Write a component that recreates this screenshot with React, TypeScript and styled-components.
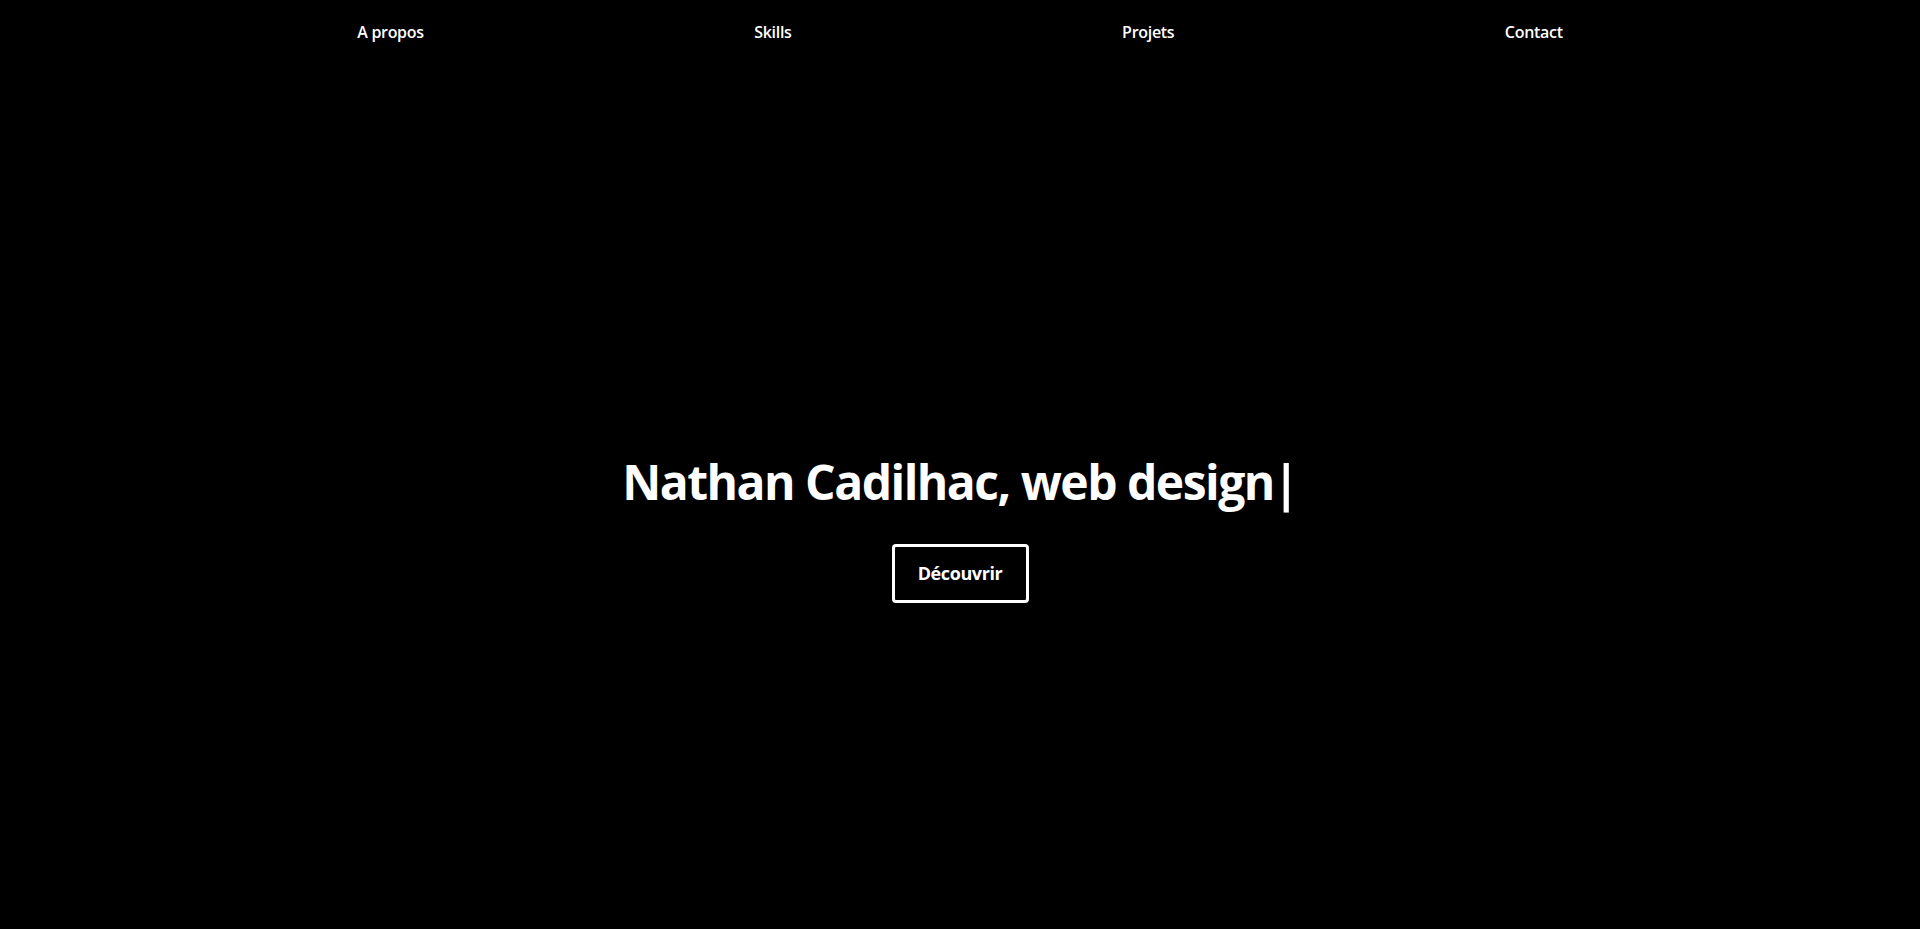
import React from "react";
import styled, { createGlobalStyle } from "styled-components";

const Global = createGlobalStyle`
  html, body { margin: 0; padding: 0; background: #000; }
  body { font-family: "Open Sans", "Noto Sans", sans-serif; color: #fff; }
  * { box-sizing: border-box; }
`;

const Page = styled.div`
  min-height: 100vh;
  background: #000;
  display: flex;
  flex-direction: column;
`;

const Nav = styled.nav`
  height: 64px;
  width: 80%;
  margin: 0 auto;
  display: flex;
  align-items: center;
  justify-content: space-around;
`;

const NavLink = styled.a`
  color: #fff;
  text-decoration: none;
  font-size: 16px;
  font-weight: 600;
  letter-spacing: -0.3px;
`;

const Hero = styled.section`
  height: calc(100vh - 64px);
  padding-top: 58px;
  display: flex;
  flex-direction: column;
  align-items: center;
  justify-content: center;
`;

const Title = styled.h1`
  margin: 0;
  font-size: 48px;
  font-weight: 700;
  letter-spacing: -1.5px;
  color: #fff;
  white-space: nowrap;
`;

const Caret = styled.span`
  font-weight: 700;
  margin-left: -1px;
  display: inline-block;
  transform: scaleY(1.05);
`;

const Button = styled.button`
  margin-top: 30px;
  width: 137px;
  height: 59px;
  border: 3px solid #fff;
  border-radius: 4px;
  background: transparent;
  color: #fff;
  font-family: "Open Sans", "Noto Sans", sans-serif;
  font-size: 18px;
  font-weight: 700;
  letter-spacing: -0.4px;
  cursor: pointer;
`;

export default function App() {
  return (
    <Page>
      <Global />
      <Nav>
        <NavLink href="#about">A propos</NavLink>
        <NavLink href="#skills">Skills</NavLink>
        <NavLink href="#projects">Projets</NavLink>
        <NavLink href="#contact">Contact</NavLink>
      </Nav>
      <Hero>
        <Title>
          Nathan Cadilhac, web design<Caret>|</Caret>
        </Title>
        <Button>Découvrir</Button>
      </Hero>
    </Page>
  );
}
